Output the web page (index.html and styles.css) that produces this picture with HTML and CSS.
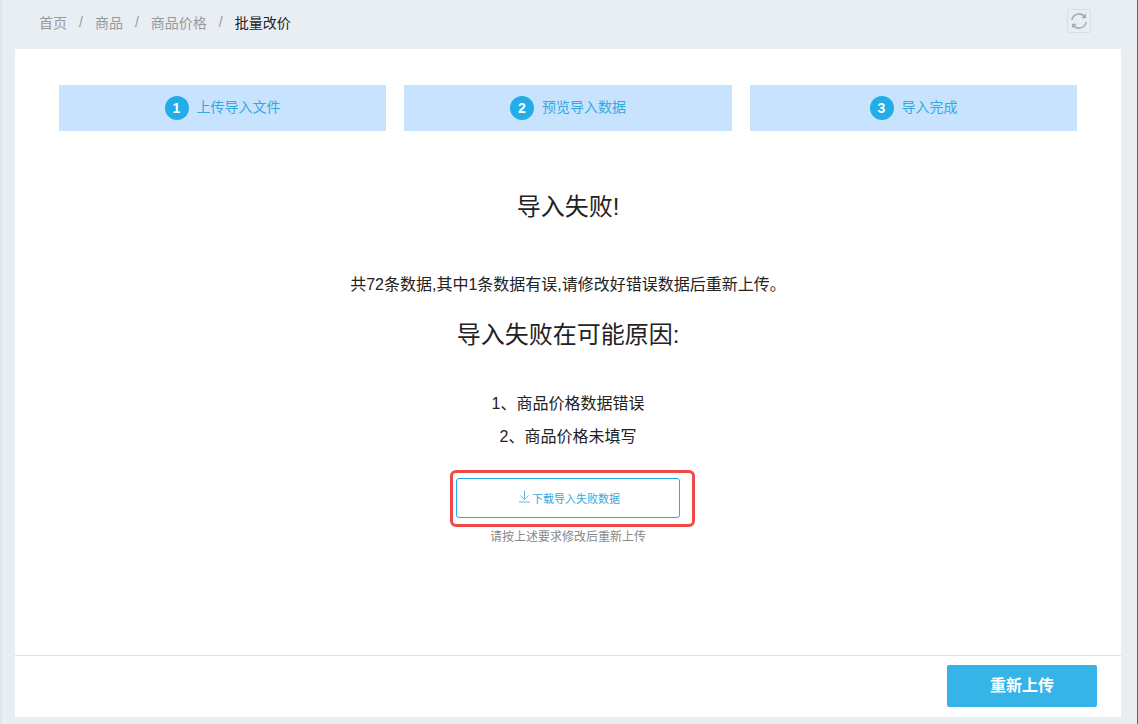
FILE: index.html
```html
<!DOCTYPE html>
<html lang="zh">
<head>
<meta charset="utf-8">
<title>批量改价</title>
<link rel="stylesheet" href="styles.css">
</head>
<body>
<div class="page">
  <header class="topbar">
    <nav class="crumbs">
      <span class="crumb">首页</span><span class="sep">/</span>
      <span class="crumb">商品</span><span class="sep">/</span>
      <span class="crumb">商品价格</span><span class="sep">/</span>
      <span class="crumb current">批量改价</span>
    </nav>
    <button class="refresh" aria-label="刷新">
      <svg width="18" height="18" viewBox="0 0 18 18" fill="none" stroke="#9eadbf" stroke-width="1.6">
        <path d="M1.9 8A7.1 7.1 0 0 1 14.6 4.8"/>
        <path d="M16.1 10A7.1 7.1 0 0 1 3.4 13.2"/>
        <path d="M16 1.4V6.2h-4.8z" fill="#9eadbf" stroke="none"/>
        <path d="M2 16.6V11.8h4.8z" fill="#9eadbf" stroke="none"/>
      </svg>
    </button>
  </header>
  <main class="card">
    <div class="content">
      <ol class="steps">
        <li class="step"><span class="num">1</span><span class="step-label">上传导入文件</span></li>
        <li class="step"><span class="num">2</span><span class="step-label">预览导入数据</span></li>
        <li class="step"><span class="num">3</span><span class="step-label">导入完成</span></li>
      </ol>
      <h2 class="title">导入失败!</h2>
      <p class="summary">共72条数据,其中1条数据有误,请修改好错误数据后重新上传。</p>
      <h2 class="reason-title">导入失败在可能原因:</h2>
      <p class="reason first">1、商品价格数据错误</p>
      <p class="reason">2、商品价格未填写</p>
      <div class="highlight">
        <a class="download">
          <svg class="dl-icon" width="13" height="13" viewBox="0 0 13 13" fill="none" stroke="#5cc0ea" stroke-width="1">
            <path d="M6.5 0.5V9M2.5 5.5L6.5 9.5L10.5 5.5M1 12H12"/>
          </svg><span>下载导入失败数据</span>
        </a>
      </div>
      <p class="hint">请按上述要求修改后重新上传</p>
    </div>
    <footer class="actions">
      <button class="primary">重新上传</button>
    </footer>
  </main>
</div>
</body>
</html>
```
FILE: styles.css
```css
* { box-sizing: border-box; }
html, body { margin: 0; padding: 0; }
body {
  width: 1138px;
  height: 724px;
  overflow: hidden;
  background: #e9eef3;
  box-shadow: inset 2px 0 0 #e1e6ea, inset -1px 0 0 #5d6372;
  font-family: "Liberation Sans", "Noto Sans CJK SC", sans-serif;
  color: #222;
}
.page {
  height: 724px;
  padding: 0 17px 7px 15px;
  display: flex;
  flex-direction: column;
}
.topbar {
  height: 49px;
  display: flex;
  justify-content: space-between;
  padding: 9px 30px 0 24px;
  flex: none;
}
.crumbs {
  display: flex;
  align-items: center;
  height: 26px;
  font-size: 14px;
  color: #999;
}
.sep { margin: 0 12px; color: #999; }
.current { color: #222; }
.refresh {
  width: 24px;
  height: 24px;
  padding: 0;
  background: #e9eef3;
  border: 1px solid #d8dfe6;
  border-radius: 2px;
  display: flex;
  align-items: center;
  justify-content: center;
}
.card {
  flex: 1;
  background: #fff;
  display: flex;
  flex-direction: column;
}
.content {
  flex: 1;
  display: flex;
  flex-direction: column;
  align-items: center;
  padding-top: 36px;
}
.steps {
  list-style: none;
  margin: 0;
  padding: 0;
  width: 1018px;
  display: grid;
  grid-template-columns: 327px 328px 327px;
  column-gap: 18px;
}
.step {
  height: 46px;
  background: #c8e3fe;
  display: flex;
  align-items: center;
  justify-content: center;
  gap: 8px;
  font-size: 14px;
  color: #36a8df;
}
.step-label { padding-bottom: 4px; }
.num {
  width: 24px;
  height: 24px;
  border-radius: 50%;
  background: #22ace8;
  color: #fff;
  font-size: 14px;
  font-weight: bold;
  display: flex;
  align-items: center;
  justify-content: center;
}
.title {
  margin: 60px 0 0;
  font-size: 24px;
  line-height: 32px;
  font-weight: normal;
  color: #222;
}
.summary {
  margin: 51px 0 0;
  font-size: 16px;
  line-height: 22px;
  color: #222;
}
.reason-title {
  margin: 23px 0 0;
  font-size: 24px;
  line-height: 32px;
  font-weight: normal;
  color: #222;
}
.reason {
  margin: 0;
  font-size: 16px;
  line-height: 33px;
  color: #222;
}
.reason.first { margin-top: 36px; }
.highlight {
  margin: 17px 0 0 8px;
  width: 245px;
  height: 57px;
  border: 3px solid #f04a48;
  border-radius: 6px;
  padding: 5px 0 0 3px;
}
.download {
  width: 224px;
  height: 40px;
  border: 1px solid #22ace8;
  border-radius: 3px;
  display: flex;
  align-items: center;
  justify-content: center;
  padding-left: 2px;
  font-size: 11px;
  color: #36a8df;
}
.dl-icon { margin: 0 1px 4px 1px; }
.hint {
  margin: 1px 0 0;
  font-size: 12px;
  line-height: 18px;
  color: #888;
}
.actions {
  flex: none;
  height: 62px;
  border-top: 1px solid #e3e3e3;
  display: flex;
  justify-content: flex-end;
  padding: 9px 24px 0 0;
}
.primary {
  width: 150px;
  height: 42px;
  border: none;
  border-radius: 2px;
  background: #36b4e8;
  color: #fff;
  font-family: inherit;
  font-size: 16px;
  font-weight: bold;
  padding: 0 0 4px;
}
```
